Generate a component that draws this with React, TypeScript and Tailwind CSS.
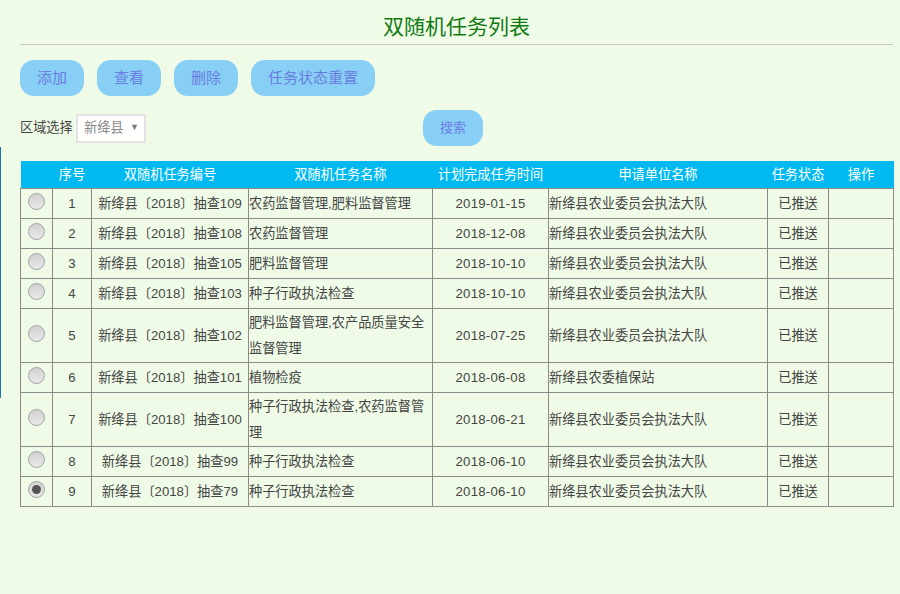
const FONT = '[font-family:"Liberation_Sans","Noto_Sans_CJK_SC",sans-serif]';

type Row = { no: number; code: string; name: string; date: string; org: string; rowH: string; checked?: boolean };

const rows: Row[] = [
  { no: 1, code: '新绛县〔2018〕抽查109', name: '农药监督管理,肥料监督管理', date: '2019-01-15', org: '新绛县农业委员会执法大队', rowH: 'h-[30px]' },
  { no: 2, code: '新绛县〔2018〕抽查108', name: '农药监督管理', date: '2018-12-08', org: '新绛县农业委员会执法大队', rowH: 'h-[30px]' },
  { no: 3, code: '新绛县〔2018〕抽查105', name: '肥料监督管理', date: '2018-10-10', org: '新绛县农业委员会执法大队', rowH: 'h-[30px]' },
  { no: 4, code: '新绛县〔2018〕抽查103', name: '种子行政执法检查', date: '2018-10-10', org: '新绛县农业委员会执法大队', rowH: 'h-[30px]' },
  { no: 5, code: '新绛县〔2018〕抽查102', name: '肥料监督管理,农产品质量安全监督管理', date: '2018-07-25', org: '新绛县农业委员会执法大队', rowH: 'h-[53px]' },
  { no: 6, code: '新绛县〔2018〕抽查101', name: '植物检疫', date: '2018-06-08', org: '新绛县农委植保站', rowH: 'h-[30px]' },
  { no: 7, code: '新绛县〔2018〕抽查100', name: '种子行政执法检查,农药监督管理', date: '2018-06-21', org: '新绛县农业委员会执法大队', rowH: 'h-[54px]' },
  { no: 8, code: '新绛县〔2018〕抽查99', name: '种子行政执法检查', date: '2018-06-10', org: '新绛县农业委员会执法大队', rowH: 'h-[30px]' },
  { no: 9, code: '新绛县〔2018〕抽查79', name: '种子行政执法检查', date: '2018-06-10', org: '新绛县农业委员会执法大队', rowH: 'h-[30px]', checked: true },
];

const headers = ['', '序号', '双随机任务编号', '双随机任务名称', '计划完成任务时间', '申请单位名称', '任务状态', '操作'];

function Pill({ label, wide }: { label: string; wide?: boolean }) {
  return (
    <button className={`h-[36px] rounded-[14px] bg-[#88cff6] text-[15px] text-[#6a7de0] ${wide ? 'w-[124px]' : 'w-[64px]'}`}>
      {label}
    </button>
  );
}

function Radio({ checked }: { checked?: boolean }) {
  return (
    <span className="flex h-[17px] w-[17px] items-center justify-center rounded-full border border-[#a4a4a4] bg-gradient-to-b from-[#d2d2d2] to-[#e8e8e8]">
      {checked && <span className="h-[9px] w-[9px] rounded-full bg-[#555]" />}
    </span>
  );
}

export default function App() {
  return (
    <div className={`relative h-[594px] w-[900px] overflow-hidden bg-[#effbe7] px-[20px] pr-[7px] text-[13.2px] text-[#454545] ${FONT}`}>
      <div className="absolute left-0 top-[147px] h-[251px] w-[1px] bg-[#1b75bc]" />

      <h1 className="h-[45px] border-b border-[#c6c6c6] pt-[11px] text-center text-[21px] leading-[32px] text-[#127a12]">
        双随机任务列表
      </h1>

      <div className="mt-[15px] flex gap-[13px]">
        <Pill label="添加" />
        <Pill label="查看" />
        <Pill label="删除" />
        <Pill label="任务状态重置" wide />
      </div>

      <div className="mt-[14px] flex h-[36px] items-center">
        <span className="w-[56px]">区域选择</span>
        <div className="flex h-[29px] w-[70px] items-center justify-between border-2 border-[#e3e3e3] bg-white pl-[6px] pr-[5px] text-[#8a8a8a]">
          <span>新绛县</span>
          <span className="text-[9px] text-[#777]">▼</span>
        </div>
        <button className="ml-[277px] h-[36px] w-[60px] rounded-[14px] bg-[#88cff6] text-[13px] text-[#6a7de0]">搜索</button>
      </div>

      <table className="mt-[15px] w-[873px] table-fixed border-collapse">
        <colgroup>
          <col className="w-[32px]" />
          <col className="w-[39px]" />
          <col className="w-[157px]" />
          <col className="w-[184px]" />
          <col className="w-[116px]" />
          <col className="w-[219px]" />
          <col className="w-[61px]" />
          <col className="w-[65px]" />
        </colgroup>
        <thead>
          <tr className="h-[27px] bg-[#00b9f1] text-white">
            {headers.map((h, i) => (
              <th key={i} className="p-0 pt-[2px] text-center font-normal">{h}</th>
            ))}
          </tr>
        </thead>
        <tbody>
          {rows.map(r => (
            <tr key={r.no} className={r.rowH}>
              <td className="border border-[#8c8c8c] p-0">
                <div className="mb-[3px] flex justify-center"><Radio checked={r.checked} /></div>
              </td>
              <td className="border border-[#8c8c8c] p-0 pt-[2px] text-center">{r.no}</td>
              <td className="border border-[#8c8c8c] p-0 pt-[2px] text-center">{r.code}</td>
              <td className="border border-[#8c8c8c] p-0 pt-[1px] leading-[26px]">{r.name}</td>
              <td className="border border-[#8c8c8c] p-0 pt-[2px] text-center tracking-[0.25px]">{r.date}</td>
              <td className="border border-[#8c8c8c] p-0 pt-[2px]">{r.org}</td>
              <td className="border border-[#8c8c8c] p-0 pt-[2px] text-center">已推送</td>
              <td className="border border-[#8c8c8c] p-0" />
            </tr>
          ))}
        </tbody>
      </table>
    </div>
  );
}
